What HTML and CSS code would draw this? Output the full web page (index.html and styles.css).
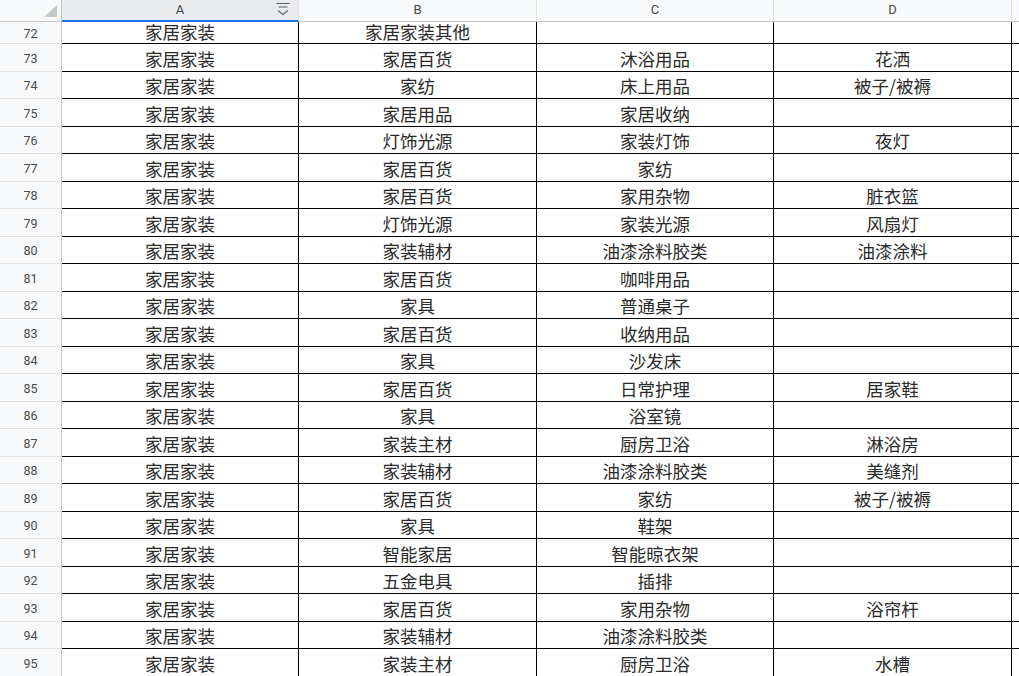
FILE: index.html
```html
<!DOCTYPE html>
<html lang="zh">
<head>
<meta charset="utf-8">
<title>Sheet</title>
<link rel="stylesheet" href="styles.css">
</head>
<body>
<div class="sheet">
  <div class="corner"><span class="tri"></span></div>
  <div class="colh colh-sel">A<svg class="filter" width="16" height="16" viewBox="0 0 16 16"><path d="M1.5 2.5h13M3.5 6h9M3 9.5l5 4 5-4" fill="none" stroke="#5f6368" stroke-width="1.2"/></svg></div>
  <div class="colh">B</div>
  <div class="colh">C</div>
  <div class="colh">D</div>
  <div class="colh colh-e"></div>

  <div class="rowh first">72</div><div class="c first">家居家装</div><div class="c first">家居家装其他</div><div class="c first"></div><div class="c first"></div><div class="c first e"></div>
  <div class="rowh">73</div><div class="c">家居家装</div><div class="c">家居百货</div><div class="c">沐浴用品</div><div class="c">花洒</div><div class="c e"></div>
  <div class="rowh">74</div><div class="c">家居家装</div><div class="c">家纺</div><div class="c">床上用品</div><div class="c">被子/被褥</div><div class="c e"></div>
  <div class="rowh">75</div><div class="c">家居家装</div><div class="c">家居用品</div><div class="c">家居收纳</div><div class="c"></div><div class="c e"></div>
  <div class="rowh">76</div><div class="c">家居家装</div><div class="c">灯饰光源</div><div class="c">家装灯饰</div><div class="c">夜灯</div><div class="c e"></div>
  <div class="rowh">77</div><div class="c">家居家装</div><div class="c">家居百货</div><div class="c">家纺</div><div class="c"></div><div class="c e"></div>
  <div class="rowh">78</div><div class="c">家居家装</div><div class="c">家居百货</div><div class="c">家用杂物</div><div class="c">脏衣篮</div><div class="c e"></div>
  <div class="rowh">79</div><div class="c">家居家装</div><div class="c">灯饰光源</div><div class="c">家装光源</div><div class="c">风扇灯</div><div class="c e"></div>
  <div class="rowh">80</div><div class="c">家居家装</div><div class="c">家装辅材</div><div class="c">油漆涂料胶类</div><div class="c">油漆涂料</div><div class="c e"></div>
  <div class="rowh">81</div><div class="c">家居家装</div><div class="c">家居百货</div><div class="c">咖啡用品</div><div class="c"></div><div class="c e"></div>
  <div class="rowh">82</div><div class="c">家居家装</div><div class="c">家具</div><div class="c">普通桌子</div><div class="c"></div><div class="c e"></div>
  <div class="rowh">83</div><div class="c">家居家装</div><div class="c">家居百货</div><div class="c">收纳用品</div><div class="c"></div><div class="c e"></div>
  <div class="rowh">84</div><div class="c">家居家装</div><div class="c">家具</div><div class="c">沙发床</div><div class="c"></div><div class="c e"></div>
  <div class="rowh">85</div><div class="c">家居家装</div><div class="c">家居百货</div><div class="c">日常护理</div><div class="c">居家鞋</div><div class="c e"></div>
  <div class="rowh">86</div><div class="c">家居家装</div><div class="c">家具</div><div class="c">浴室镜</div><div class="c"></div><div class="c e"></div>
  <div class="rowh">87</div><div class="c">家居家装</div><div class="c">家装主材</div><div class="c">厨房卫浴</div><div class="c">淋浴房</div><div class="c e"></div>
  <div class="rowh">88</div><div class="c">家居家装</div><div class="c">家装辅材</div><div class="c">油漆涂料胶类</div><div class="c">美缝剂</div><div class="c e"></div>
  <div class="rowh">89</div><div class="c">家居家装</div><div class="c">家居百货</div><div class="c">家纺</div><div class="c">被子/被褥</div><div class="c e"></div>
  <div class="rowh">90</div><div class="c">家居家装</div><div class="c">家具</div><div class="c">鞋架</div><div class="c"></div><div class="c e"></div>
  <div class="rowh">91</div><div class="c">家居家装</div><div class="c">智能家居</div><div class="c">智能晾衣架</div><div class="c"></div><div class="c e"></div>
  <div class="rowh">92</div><div class="c">家居家装</div><div class="c">五金电具</div><div class="c">插排</div><div class="c"></div><div class="c e"></div>
  <div class="rowh">93</div><div class="c">家居家装</div><div class="c">家居百货</div><div class="c">家用杂物</div><div class="c">浴帘杆</div><div class="c e"></div>
  <div class="rowh">94</div><div class="c">家居家装</div><div class="c">家装辅材</div><div class="c">油漆涂料胶类</div><div class="c"></div><div class="c e"></div>
  <div class="rowh">95</div><div class="c">家居家装</div><div class="c">家装主材</div><div class="c">厨房卫浴</div><div class="c">水槽</div><div class="c e"></div>
</div>
</body>
</html>
```

FILE: styles.css
```css
html, body {
  margin: 0;
  padding: 0;
  background: #ffffff;
  overflow: hidden;
}

.sheet {
  display: grid;
  grid-template-columns: 62px 237px 238px 237px 238px 1fr;
  grid-template-rows: 22px 22px repeat(23, 27.5px);
  width: 1019px;
  height: 676px;
  overflow: hidden;
  font-family: "Noto Sans CJK SC", "Noto Sans", sans-serif;
}

.corner {
  position: relative;
  background: #f8f9fa;
  border-right: 1px solid #c7c7c7;
  border-bottom: 1px solid #c7c7c7;
  box-sizing: border-box;
}

.tri {
  position: absolute;
  right: 4px;
  bottom: 4px;
  width: 0;
  height: 0;
  border-left: 13px solid transparent;
  border-bottom: 12px solid #c4c7c5;
}

.colh {
  position: relative;
  box-sizing: border-box;
  background: #f8f9fa;
  border-right: 1px solid #e1e1e1;
  border-bottom: 1px solid #c7c7c7;
  display: flex;
  align-items: center;
  justify-content: center;
  padding-bottom: 2px;
  font-family: "Roboto", "Liberation Sans", sans-serif;
  font-size: 13px;
  color: #444746;
}

.colh-sel {
  background: #eaebed;
  border-bottom: 2px solid #1a73e8;
}

.colh-e {
  border-right: none;
}

.filter {
  position: absolute;
  right: 7px;
  top: 1px;
}

.rowh {
  box-sizing: border-box;
  background: #f8f9fa;
  border-right: 1px solid #c7c7c7;
  border-bottom: 1px solid #e1e1e1;
  display: flex;
  align-items: center;
  justify-content: center;
  padding-top: 2px;
  font-family: "Roboto", "Liberation Sans", sans-serif;
  font-size: 12.5px;
  color: #4a4a4a;
}

.c {
  box-sizing: border-box;
  border-right: 1px solid #000000;
  border-bottom: 1px solid #000000;
  display: flex;
  align-items: center;
  justify-content: center;
  padding-top: 3px;
  font-size: 17.5px;
  line-height: 18px;
  color: #2a2a2a;
  white-space: nowrap;
}

.c.e {
  border-right: none;
}

.first {
  align-items: flex-end;
  padding-top: 0;
  padding-bottom: 2px;
}
```
